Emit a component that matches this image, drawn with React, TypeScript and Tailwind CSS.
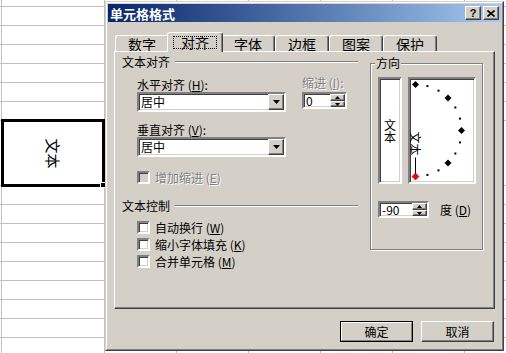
import React from "react";

const FONT = "font-['Noto_Sans_CJK_SC','Liberation_Sans',sans-serif]";

const rowHeights = [
  "h-[7px]", "h-[19px]", "h-[19px]", "h-[19px]", "h-[19px]", "h-[19px]", "h-[19px]",
  "h-[65px]", "h-[19px]", "h-[19px]", "h-[19px]", "h-[19px]", "h-[19px]", "h-[19px]",
  "h-[19px]", "h-[19px]", "h-[19px]",
];
const colWidths = ["w-[2px]", "w-[103px]", "w-[72px]", "w-[72px]", "w-[72px]", "w-[72px]", "w-[72px]", "w-[72px]"];

const tabs = [
  { label: "数字", w: "w-[54px]" },
  { label: "对齐", w: "w-[52px]", active: true },
  { label: "字体", w: "w-[54px]" },
  { label: "边框", w: "w-[54px]" },
  { label: "图案", w: "w-[54px]" },
  { label: "保护", w: "w-[54px]" },
];

const Sheet = () => (
  <div className="flex flex-col">
    {rowHeights.map((h, i) => (
      <div key={i} className={`flex flex-none border-b border-[#c0c0c0] ${h}`}>
        {colWidths.map((w, j) => (
          <div key={j} className={`h-full flex-none border-r border-[#c0c0c0] ${w}`} />
        ))}
      </div>
    ))}
  </div>
);

const Sunken = ({ className = "", children }: { className?: string; children?: React.ReactNode }) => (
  <div
    className={`border-2 border-t-[#808080] border-l-[#808080] border-r-white border-b-white shadow-[inset_1px_1px_0_#404040,inset_-1px_-1px_0_#d4d0c8] ${className}`}
  >
    {children}
  </div>
);

const Raised = ({ className = "", children }: { className?: string; children?: React.ReactNode }) => (
  <div
    className={`flex items-center justify-center bg-[#d4d0c8] border border-t-white border-l-white border-r-[#404040] border-b-[#404040] shadow-[inset_-1px_-1px_0_#808080] ${className}`}
  >
    {children}
  </div>
);

const DownArrow = () => (
  <svg width="7" height="4" viewBox="0 0 7 4">
    <path d="M0 0h7L3.5 4z" fill="#000" />
  </svg>
);

const Combo = ({ value }: { value: string }) => (
  <Sunken className="flex h-[20px] w-[149px] items-center bg-white">
    <span className="flex-1 pl-[2px] text-[12px] leading-[12px]">{value}</span>
    <Raised className="h-[16px] w-[16px]">
      <DownArrow />
    </Raised>
  </Sunken>
);

const Spin = ({ value, w }: { value: string; w: string }) => (
  <Sunken className={`flex h-[17px] items-center bg-white ${w}`}>
    <span className="flex-1 pl-[2px] text-[12px] leading-[12px]">{value}</span>
    <div className="flex h-full w-[15px] flex-col">
      <Raised className="h-[7px] w-full">
        <svg width="5" height="3" viewBox="0 0 5 3">
          <path d="M2.5 0L5 3H0z" fill="#000" />
        </svg>
      </Raised>
      <Raised className="h-[6px] w-full">
        <svg width="5" height="3" viewBox="0 0 5 3">
          <path d="M0 0h5L2.5 3z" fill="#000" />
        </svg>
      </Raised>
    </div>
  </Sunken>
);

const Check = ({ label, disabled }: { label: React.ReactNode; disabled?: boolean }) => (
  <div className="flex h-[13px] items-center gap-[5px]">
    <Sunken className={`h-[13px] w-[13px] ${disabled ? "bg-[#d4d0c8]" : "bg-white"}`} />
    <span
      className={`text-[12px] leading-[12px] ${disabled ? "text-[#808080] [text-shadow:1px_1px_0_#fff]" : ""}`}
    >
      {label}
    </span>
  </div>
);

const GroupLabel = ({ text }: { text: string }) => (
  <div className="flex h-[12px] items-center gap-[5px]">
    <span className="text-[12px] leading-[12px]">{text}</span>
    <div className="h-[2px] flex-1 border-t border-b border-t-[#808080] border-b-white" />
  </div>
);

const Dial = () => {
  const cx = 5.5, cy = 51.5, r = 46;
  const marks: React.ReactNode[] = [];
  for (let a = 90; a >= -90; a -= 15) {
    const rad = (a * Math.PI) / 180;
    const x = cx + r * Math.cos(rad);
    const y = cy - r * Math.sin(rad);
    if (a % 45 === 0) {
      const s = 3.5;
      marks.push(
        <polygon
          key={a}
          points={`${x},${y - s} ${x + s},${y} ${x},${y + s} ${x - s},${y}`}
          fill={a === -90 ? "#ff0000" : "#000"}
          stroke={a === -90 ? "#600" : "none"}
          strokeWidth="0.5"
        />
      );
    } else {
      marks.push(<rect key={a} x={x - 1} y={y - 1} width="2" height="2" fill="#000" />);
    }
  }
  return (
    <svg width="64" height="103" viewBox="0 0 64 103" className="block">
      <line x1={cx} y1={cy + 27} x2={cx} y2={cy + 44} stroke="#000" strokeWidth="1" />
      <text
        transform={`translate(${cx} ${cy + 1}) rotate(90)`}
        x="0"
        y="0"
        fontSize="12"
        dominantBaseline="central"
        fontFamily="Noto Sans CJK SC, sans-serif"
      >
        文本
      </text>
      {marks}
    </svg>
  );
};

const TitleBar = () => (
  <div className="flex h-[18px] flex-none items-center justify-between bg-linear-to-r from-[#0a246a] to-[#a6caf0] pl-[2px] pr-[2px]">
    <span className="text-[13px] font-bold leading-[13px] text-white">单元格格式</span>
    <div className="flex gap-[2px]">
      <Raised className="h-[14px] w-[16px]">
        <span className="font-['Liberation_Sans',sans-serif] text-[11px] font-bold leading-[11px]">?</span>
      </Raised>
      <Raised className="h-[14px] w-[16px]">
        <svg width="8" height="7" viewBox="0 0 8 7">
          <path d="M0.5 0.5L7.5 6.5M7.5 0.5L0.5 6.5" stroke="#000" strokeWidth="1.6" />
        </svg>
      </Raised>
    </div>
  </div>
);

const Tabs = () => (
  <div className="mt-[10px] flex h-[19px] flex-none items-end pl-[1px]">
    {tabs.map((t) =>
      t.active ? (
        <div
          key={t.label}
          className="relative z-10 -mx-[2px] -mb-[1px] flex h-[20px] w-[56px] items-center justify-center rounded-t-[3px] border-l border-t border-r border-l-white border-t-white border-r-[#404040] bg-[#d4d0c8] shadow-[inset_-1px_0_0_#808080]"
        >
          <span className="border border-dotted border-black px-[7px] text-[14px] leading-[11px]">{t.label}</span>
        </div>
      ) : (
        <div
          key={t.label}
          className={`flex h-[16px] items-center justify-center rounded-t-[3px] border-l border-t border-r border-l-white border-t-white border-r-[#404040] bg-[#d4d0c8] shadow-[inset_-1px_0_0_#808080] text-[14px] leading-[14px] ${t.w}`}
        >
          {t.label}
        </div>
      )
    )}
  </div>
);

const Panel = () => (
  <div className="flex h-[258px] flex-none gap-[12px] border border-l-white border-t-white border-r-[#404040] border-b-[#404040] pl-[7px] pt-[4px] shadow-[inset_-1px_-1px_0_#808080]">
    <div className="flex w-[236px] flex-col">
      <GroupLabel text="文本对齐" />
      <div className="ml-[15px] mt-[11px] flex gap-[16px]">
        <div className="flex flex-col">
          <span className="text-[12px] leading-[12px]">
            水平对齐 (<u>H</u>):
          </span>
          <div className="mt-[1px]">
            <Combo value="居中" />
          </div>
          <span className="mt-[12px] text-[12px] leading-[12px]">
            垂直对齐 (<u>V</u>):
          </span>
          <div className="mt-[1px]">
            <Combo value="居中" />
          </div>
          <div className="mt-[14px]">
            <Check disabled label={<>增加缩进 (<u>E</u>)</>} />
          </div>
        </div>
        <div className="-mt-[2px] flex flex-col">
          <span className="text-[12px] leading-[12px] text-[#808080] [text-shadow:1px_1px_0_#fff]">
            缩进 (<u>I</u>):
          </span>
          <div className="mt-[3px]">
            <Spin value="0" w="w-[45px]" />
          </div>
        </div>
      </div>
      <div className="mt-[16px]">
        <GroupLabel text="文本控制" />
      </div>
      <div className="ml-[15px] mt-[9px] flex flex-col gap-[4px]">
        <Check label={<>自动换行 (<u>W</u>)</>} />
        <Check label={<>缩小字体填充 (<u>K</u>)</>} />
        <Check label={<>合并单元格 (<u>M</u>)</>} />
      </div>
    </div>
    <div className="relative mt-[7px] h-[187px] w-[113px] border border-[#808080] pl-[7px] pt-[13px] shadow-[inset_1px_1px_0_#fff,1px_1px_0_#fff]">
      <span className="absolute left-[4px] -top-[7px] bg-[#d4d0c8] px-[1px] text-[12px] leading-[12px]">方向</span>
      <div className="flex gap-[6px]">
        <Sunken className="flex h-[107px] w-[24px] flex-col items-center justify-center bg-white text-[12px] leading-[12px]">
          <span className="block">文</span>
          <span className="block">本</span>
        </Sunken>
        <Sunken className="h-[107px] w-[68px] overflow-hidden bg-white">
          <Dial />
        </Sunken>
      </div>
      <div className="mt-[17px] flex items-center gap-[11px]">
        <Spin value="-90" w="w-[51px]" />
        <span className="text-[12px] leading-[12px]">
          度 (<u>D</u>)
        </span>
      </div>
    </div>
  </div>
);

const Buttons = () => (
  <div className="mt-[12px] flex justify-end gap-[8px] pr-[1px]">
    <div className="h-[21px] w-[73px] border border-black">
      <div className="flex h-full items-center justify-center border border-t-white border-l-white border-r-[#808080] border-b-[#808080] text-[12px] leading-[12px]">
        确定
      </div>
    </div>
    <Raised className="h-[21px] w-[73px] text-[12px] leading-[12px]">取消</Raised>
  </div>
);

export default function App() {
  return (
    <div className={`relative h-[353px] w-[506px] overflow-hidden bg-white text-black ${FONT}`}>
      <Sheet />
      <div className="absolute left-[1px] top-[119px] flex h-[68px] w-[104px] items-center justify-center border-[3px] border-black bg-white">
        <span className="inline-block rotate-90 text-[15px] leading-[15px]">文本</span>
      </div>
      <div className="absolute left-[100px] top-[182px] h-[6px] w-[6px] border border-white bg-black" />
      <div className="absolute left-[105px] top-[1px] h-[350px] w-[399px] border border-t-[#d4d0c8] border-l-[#d4d0c8] border-r-[#404040] border-b-[#404040] bg-[#d4d0c8]">
        <div className="flex h-full flex-col border border-t-white border-l-white border-r-[#808080] border-b-[#808080] p-px">
          <TitleBar />
          <div className="flex flex-col px-[6px]">
            <Tabs />
            <Panel />
            <Buttons />
          </div>
        </div>
      </div>
    </div>
  );
}
